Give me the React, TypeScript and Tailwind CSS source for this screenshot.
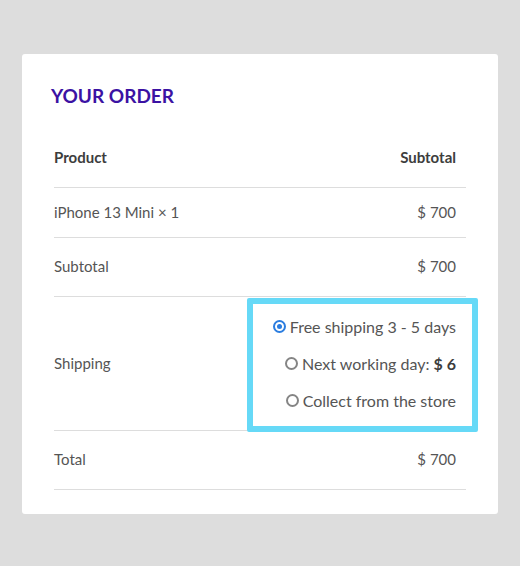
const rows = [
  { label: "iPhone 13 Mini × 1", value: "$ 700", h: "h-[50px]" },
  { label: "Subtotal", value: "$ 700", h: "h-[59px]" },
];

function Radio({ checked }: { checked?: boolean }) {
  return checked ? (
    <span className="flex h-[13px] w-[13px] items-center justify-center rounded-full border-2 border-[#2b7de0]">
      <span className="h-[5px] w-[5px] rounded-full bg-[#2b7de0]" />
    </span>
  ) : (
    <span className="h-[13px] w-[13px] rounded-full border-2 border-[#858585]" />
  );
}

export default function App() {
  return (
    <div className="min-h-screen bg-[#dddddd] pt-[54px] font-['Lato',sans-serif]">
      <div className="mx-auto h-[460px] w-[476px] rounded-[3px] bg-white px-8 pt-[30px]">
        <h3 className="-ml-[3px] text-[19px] font-bold uppercase leading-6 text-[#3b12a3]">
          Your Order
        </h3>
        <table className="mt-[20px] w-full border-collapse text-[15px] text-[#555]">
          <thead>
            <tr className="h-[59px] border-b border-[#dddddd]">
              <th className="w-[193px] p-0 text-left font-bold text-[#3d3d3d]">Product</th>
              <th className="p-0 pr-[10px] text-right font-bold text-[#3d3d3d]">Subtotal</th>
            </tr>
          </thead>
          <tbody>
            {rows.map((r) => (
              <tr key={r.label} className={`${r.h} border-b border-[#dddddd]`}>
                <td className="p-0">{r.label}</td>
                <td className="p-0 pr-[10px] text-right">{r.value}</td>
              </tr>
            ))}
            <tr className="border-b border-[#dddddd]">
              <td className="p-0">Shipping</td>
              <td className="relative p-0 pr-[10px] pt-[19px] pb-[18px] text-[16px]">
                <div className="flex flex-col items-end gap-[15px] leading-[22px]">
                  <label className="flex items-center gap-[4px]">
                    <Radio checked />
                    <span>Free shipping 3 - 5 days</span>
                  </label>
                  <label className="flex items-center gap-[4px]">
                    <Radio />
                    <span>
                      Next working day: <b className="text-[#3d3d3d]">$ 6</b>
                    </span>
                  </label>
                  <label className="flex items-center gap-[4px]">
                    <Radio />
                    <span>Collect from the store</span>
                  </label>
                </div>
                <div className="pointer-events-none absolute top-[1px] -right-[12px] -bottom-[2px] left-0 rounded-[2px] border-[6px] border-[#66d9f7]" />
              </td>
            </tr>
            <tr className="h-[59px] border-b border-[#dddddd]">
              <td className="p-0">Total</td>
              <td className="p-0 pr-[10px] text-right">$ 700</td>
            </tr>
          </tbody>
        </table>
      </div>
    </div>
  );
}
